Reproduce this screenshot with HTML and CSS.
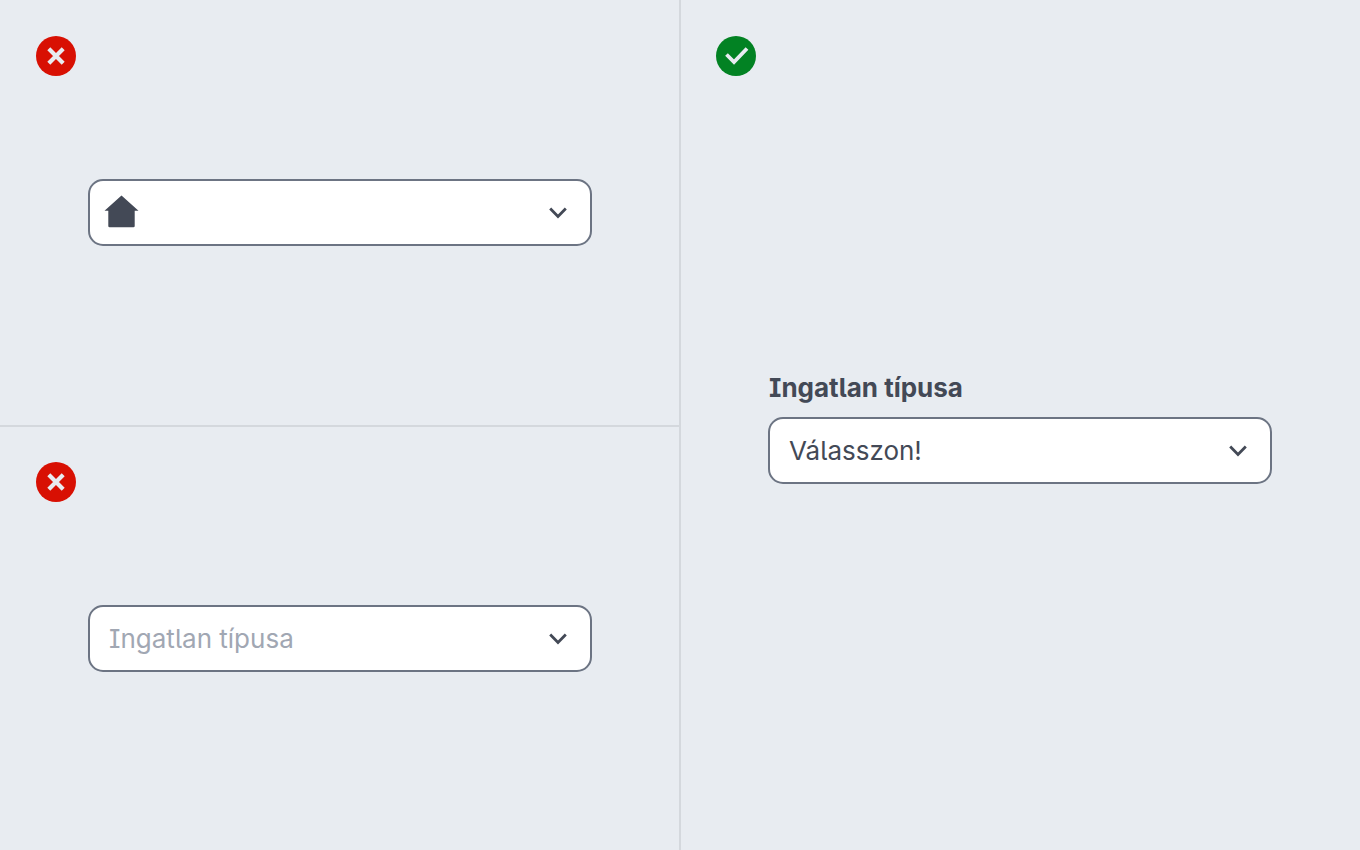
FILE: index.html
```html
<!DOCTYPE html>
<html lang="hu">
<head>
    <meta charset="UTF-8">
    <meta name="viewport" content="width=device-width, initial-scale=1.0">
    <title>Ingatlan típusa</title>
    <link rel="stylesheet" href="styles.css">
</head>
<body>
    <main class="examples">
        <div class="column">
            <section class="example">
                <svg class="badge" viewBox="0 0 40 40" role="img" aria-label="Helytelen">
                    <circle cx="20" cy="20" r="20" fill="#d81003"/>
                    <path d="M12.8 12.8L27.2 27.2M27.2 12.8L12.8 27.2" fill="none" stroke="#e8ecf1" stroke-width="4.2"/>
                </svg>
                <div class="field">
                    <div class="control">
                        <select class="select" aria-label="Ingatlan típusa">
                            <option></option>
                        </select>
                        <svg class="house" viewBox="0 0 34 33" aria-hidden="true">
                            <path d="M17 0.5L34 15.8H30.2V31Q30.2 32.3 28.9 32.3H5.1Q3.8 32.3 3.8 31V15.8H0Z" fill="#434956"/>
                        </svg>
                        <svg class="chevron" viewBox="0 0 18 12" aria-hidden="true">
                            <path d="M1.2 1.6L9 9.4L16.8 1.6"/>
                        </svg>
                    </div>
                </div>
            </section>

            <section class="example">
                <svg class="badge" viewBox="0 0 40 40" role="img" aria-label="Helytelen">
                    <circle cx="20" cy="20" r="20" fill="#d81003"/>
                    <path d="M12.8 12.8L27.2 27.2M27.2 12.8L12.8 27.2" fill="none" stroke="#e8ecf1" stroke-width="4.2"/>
                </svg>
                <div class="field">
                    <div class="control">
                        <select class="select placeholder" aria-label="Ingatlan típusa">
                            <option>Ingatlan típusa</option>
                        </select>
                        <svg class="chevron" viewBox="0 0 18 12" aria-hidden="true">
                            <path d="M1.2 1.6L9 9.4L16.8 1.6"/>
                        </svg>
                    </div>
                </div>
            </section>
        </div>

        <div class="column">
            <section class="example">
                <svg class="badge" viewBox="0 0 40 40" role="img" aria-label="Helyes">
                    <circle cx="20" cy="20" r="20" fill="#028223"/>
                    <path d="M10.5 18.5L18 26L31 12.5" fill="none" stroke="#e8ecf1" stroke-width="3.8"/>
                </svg>
                <div class="field">
                    <label class="label" for="type">Ingatlan típusa</label>
                    <div class="control">
                        <select class="select" id="type">
                            <option>Válasszon!</option>
                        </select>
                        <svg class="chevron" viewBox="0 0 18 12" aria-hidden="true">
                            <path d="M1.2 1.6L9 9.4L16.8 1.6"/>
                        </svg>
                    </div>
                </div>
            </section>
        </div>
    </main>
</body>
</html>
```
FILE: styles.css
```css
* {
    box-sizing: border-box;
}
body {
    margin: 0;
    background-color: #e8ecf1;
    color: #434956;
    font-family: Inter, "Liberation Sans", sans-serif;
    font-size: 26px;
    font-feature-settings: "cv08", "cv05";
}
.examples {
    display: grid;
    grid-template-columns: 1fr 1fr;
    min-height: 100vh;
}
.column {
    display: grid;
    grid-auto-rows: 1fr;
}
/* divider sits half on each side of the edge */
.column:first-child {
    box-shadow: 1px 0 #d4d8dd, inset -1px 0 #d4d8dd;
}
.example {
    position: relative;
    display: flex;
    align-items: center;
    padding: 0 88px;
}
.example + .example {
    border-top: 1px solid #d4d8dd;
    box-shadow: inset 0 1px #d4d8dd;
}
.badge {
    position: absolute;
    top: 36px;
    left: 36px;
    width: 40px;
    height: 40px;
}
.field {
    width: 100%;
}
.label {
    display: block;
    line-height: 42px;
    margin-bottom: 8px;
    padding-left: 1px;
    font-weight: 700;
}
.control {
    position: relative;
}
.select {
    appearance: none;
    display: block;
    width: 100%;
    height: 67px;
    padding: 0 60px 0 19px;
    border: 2px solid #6c7483;
    border-radius: 15px;
    background-color: #fff;
    color: inherit;
    font: inherit;
    font-feature-settings: inherit;
}
.placeholder {
    color: #a1a7b3;
}
.house {
    position: absolute;
    top: 16px;
    left: 16px;
    width: 35px;
    height: 33px;
    pointer-events: none;
}
.chevron {
    position: absolute;
    top: 28px;
    right: 25px;
    width: 18px;
    height: 12px;
    fill: none;
    stroke: #434956;
    stroke-width: 2.8;
    pointer-events: none;
}
```
